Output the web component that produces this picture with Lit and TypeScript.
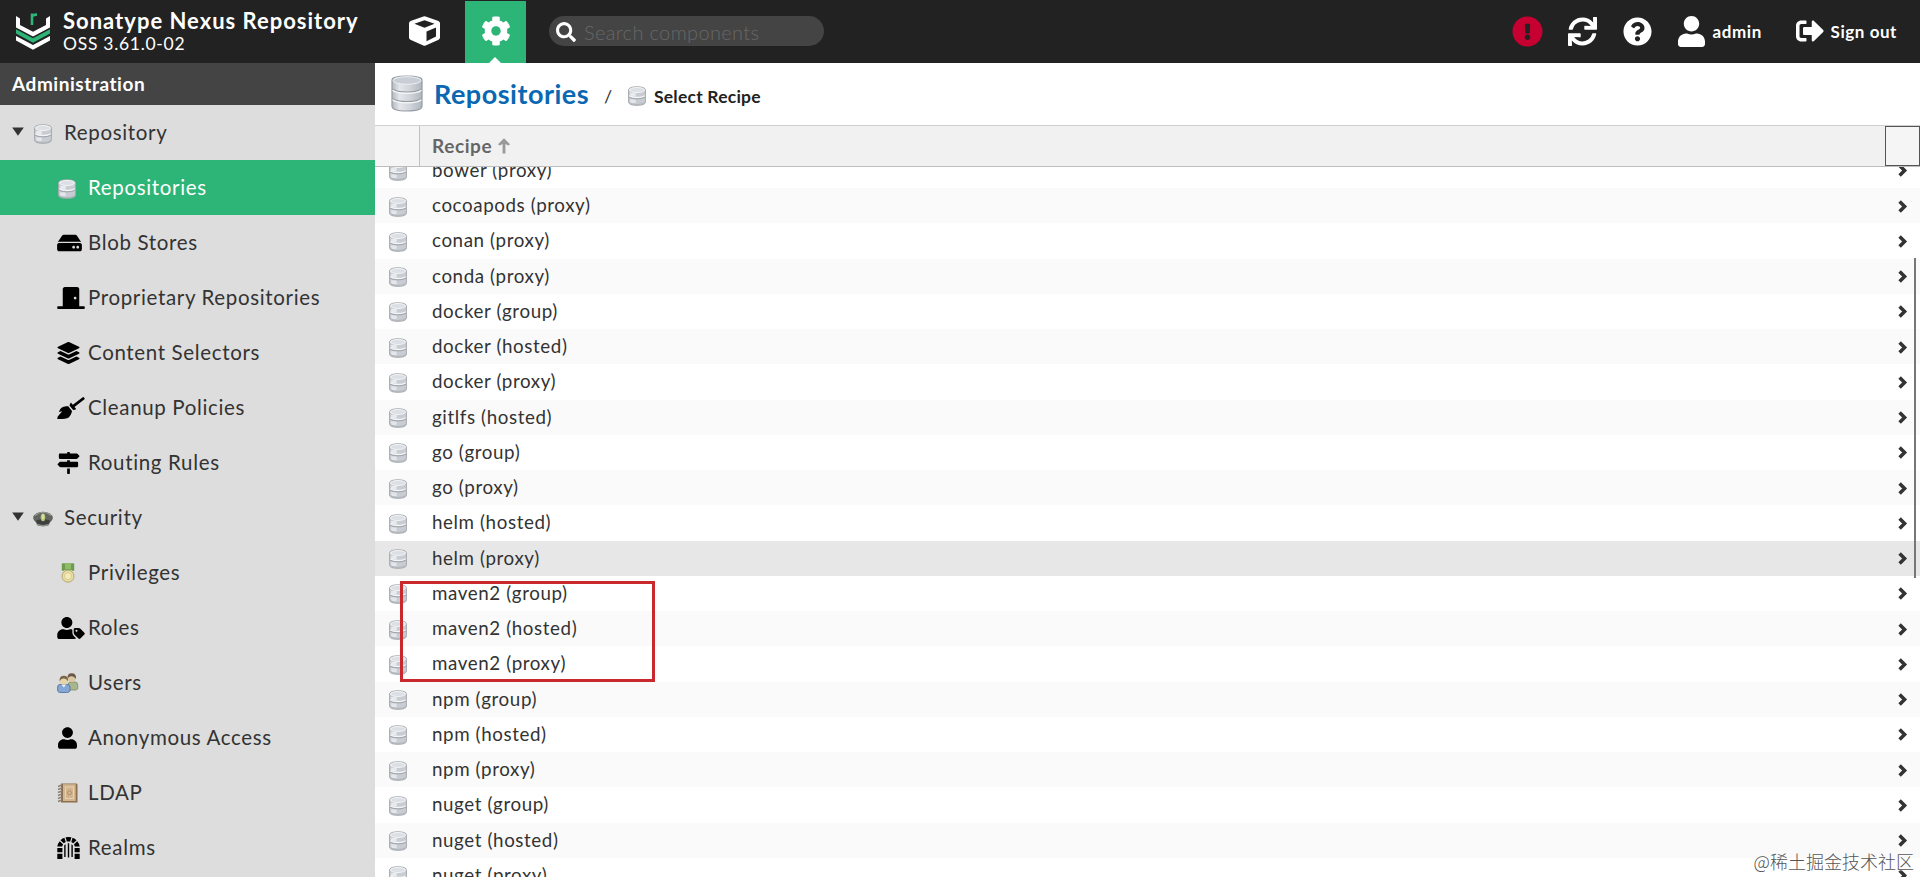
import { LitElement, html, css, svg, nothing } from "lit";
import { customElement, property } from "lit/decorators.js";
import { classMap } from "lit/directives/class-map.js";

type Glyph = { box: string; body: unknown };

const solid = (w: number, d: string): Glyph => ({ box: `0 0 ${w} 512`, body: svg`<path d=${d}></path>` });

const glyphs: Record<string, Glyph> = {
  hdd: solid(576, "M576 304v96c0 26.51-21.49 48-48 48H48c-26.51 0-48-21.49-48-48v-96c0-26.51 21.49-48 48-48h480c26.51 0 48 21.49 48 48zm-48-80a79.557 79.557 0 0 1 30.777 6.165L462.25 85.374A48.003 48.003 0 0 0 422.311 64H153.689a48 48 0 0 0-39.938 21.374L17.223 230.165A79.557 79.557 0 0 1 48 224h480zm-48 96c-17.673 0-32 14.327-32 32s14.327 32 32 32 32-14.327 32-32-14.327-32-32-32zm-96 0c-17.673 0-32 14.327-32 32s14.327 32 32 32 32-14.327 32-32-14.327-32-32-32z"),
  door: solid(640, "M624 448H512V50.8C512 22.78 490.47 0 464 0H175.99c-26.47 0-48 22.78-48 50.8V448H16c-8.84 0-16 7.16-16 16v32c0 8.84 7.16 16 16 16h608c8.84 0 16-7.16 16-16v-32c0-8.84-7.16-16-16-16zM415.99 288c-17.67 0-32-14.33-32-32s14.33-32 32-32 32 14.33 32 32c.01 17.67-14.32 32-32 32z"),
  layers: solid(512, "M12.41 148.02l232.94 105.67c6.8 3.09 14.49 3.09 21.29 0l232.94-105.67c16.55-7.51 16.55-32.52 0-40.03L266.65 2.31a25.607 25.607 0 0 0-21.29 0L12.41 107.98c-16.55 7.51-16.55 32.53 0 40.04zm487.18 88.28l-58.09-26.33-161.64 73.27c-7.56 3.43-15.59 5.17-23.86 5.17s-16.29-1.74-23.86-5.17L70.51 209.97l-58.1 26.33c-16.55 7.5-16.55 32.5 0 40l232.94 105.59c6.8 3.08 14.49 3.08 21.29 0L499.59 276.3c16.55-7.5 16.55-32.5 0-40zm0 127.8l-57.87-26.23-161.86 73.37c-7.56 3.43-15.59 5.17-23.86 5.17s-16.29-1.74-23.86-5.17L70.29 337.87 12.41 364.1c-16.55 7.5-16.55 32.5 0 40l232.94 105.59c6.8 3.08 14.49 3.08 21.29 0L499.59 404.1c16.55-7.5 16.55-32.5 0-40z"),
  broom: solid(640, "M256.47 216.77l86.73 109.18s-16.6 102.36-76.57 150.12C206.66 523.85 0 510.19 0 510.19s3.8-23.14 11-55.43l94.62-112.17c3.97-4.7-.87-11.62-6.65-9.5l-60.4 22.09c14.44-41.66 32.72-80.04 54.6-97.47 59.97-47.76 163.3-40.94 163.3-40.94zM636.53 31.03l-19.86-25c-5.49-6.9-15.52-8.05-22.41-2.56l-232.48 177.8-34.14-42.97c-5.09-6.41-15.14-5.21-18.59 2.21l-25.33 54.55 86.73 109.18 58.8-12.45c8-1.69 11.42-11.2 6.34-17.6l-34.09-42.92 232.48-177.8c6.89-5.48 8.04-15.53 2.55-22.44z"),
  signs: solid(512, "M507.31 84.69L464 41.37c-6-6-14.14-9.37-22.63-9.37H288V16c0-8.84-7.16-16-16-16h-32c-8.84 0-16 7.16-16 16v16H56c-13.25 0-24 10.75-24 24v80c0 13.25 10.75 24 24 24h385.37c8.49 0 16.62-3.37 22.63-9.37l43.31-43.31c6.25-6.26 6.25-16.38 0-22.63zM224 496c0 8.84 7.16 16 16 16h32c8.84 0 16-7.16 16-16V384h-64v112zm232-272H288v-32h-64v32H70.63c-8.49 0-16.62 3.37-22.63 9.37L4.69 276.69c-6.25 6.25-6.25 16.38 0 22.63L48 342.63c6 6 14.14 9.37 22.63 9.37H456c13.25 0 24-10.75 24-24v-80c0-13.25-10.75-24-24-24z"),
  userTag: solid(640, "M630.6 364.9l-90.3-90.2c-12-12-28.3-18.7-45.3-18.7h-79.3c-17.7 0-32 14.3-32 32v79.2c0 17 6.7 33.2 18.7 45.2l90.3 90.2c12.5 12.5 32.8 12.5 45.3 0l92.5-92.5c12.6-12.5 12.6-32.7.1-45.2zm-182.8-21c-13.3 0-24-10.7-24-24s10.7-24 24-24 24 10.7 24 24c0 13.2-10.7 24-24 24zm-223.8-88c70.7 0 128-57.3 128-128C352 57.3 294.7 0 224 0S96 57.3 96 128c0 70.6 57.3 127.9 128 127.9zm127.8 111.2V294c-12.2-3.6-24.9-6.2-38.2-6.2h-16.7c-22.2 10.2-46.9 16-72.9 16s-50.6-5.8-72.9-16h-16.7C60.2 287.9 0 348.1 0 422.3v41.6c0 26.5 21.5 48 48 48h352c15.5 0 29.1-7.5 37.9-18.9l-58-58c-18.1-18.1-28.1-42.2-28.1-67.9z"),
  user: solid(448, "M224 256c70.7 0 128-57.3 128-128S294.7 0 224 0 96 57.3 96 128s57.3 128 128 128zm89.6 32h-16.7c-22.2 10.2-46.9 16-72.9 16s-50.6-5.8-72.9-16h-16.7C60.2 288 0 348.2 0 422.4V464c0 26.5 21.5 48 48 48h352c26.5 0 48-21.5 48-48v-41.6c0-74.2-60.2-134.4-134.4-134.4z"),
  sync: solid(512, "M440.65 12.57l4 82.77A247.16 247.16 0 0 0 255.83 8C134.73 8 33.91 94.92 12.29 209.82A12 12 0 0 0 24.09 224h49.05a12 12 0 0 0 11.67-9.26 175.91 175.91 0 0 1 317-56.94l-101.46-4.86a12 12 0 0 0-12.57 12v47.41a12 12 0 0 0 12 12H500a12 12 0 0 0 12-12V12a12 12 0 0 0-12-12h-47.37a12 12 0 0 0-11.98 12.57zM255.83 432a175.61 175.61 0 0 1-146-77.8l101.8 4.87a12 12 0 0 0 12.57-12v-47.4a12 12 0 0 0-12-12H12a12 12 0 0 0-12 12V500a12 12 0 0 0 12 12h47.35a12 12 0 0 0 12-12.6l-4.15-82.57A247.17 247.17 0 0 0 255.83 504c121.11 0 221.93-86.92 243.55-201.82a12 12 0 0 0-11.8-14.18h-49.05a12 12 0 0 0-11.67 9.26A175.86 175.86 0 0 1 255.83 432z"),
  help: solid(512, "M504 256c0 136.997-111.043 248-248 248S8 392.997 8 256C8 119.083 119.043 8 256 8s248 111.083 248 248zM262.655 90c-54.497 0-89.255 22.957-116.549 63.758-3.536 5.286-2.353 12.415 2.715 16.258l34.699 26.31c5.205 3.947 12.621 3.008 16.665-2.122 17.864-22.658 30.113-35.797 57.303-35.797 20.429 0 45.698 13.148 45.698 32.958 0 14.976-12.363 22.667-32.534 33.976C247.128 238.528 216 254.941 216 296v4c0 6.627 5.373 12 12 12h56c6.627 0 12-5.373 12-12v-1.333c0-28.462 83.186-29.647 83.186-106.667 0-58.002-60.165-102-116.531-102zM256 338c-25.365 0-46 20.635-46 46 0 25.364 20.635 46 46 46s46-20.636 46-46c0-25.365-20.635-46-46-46z"),
  alert: solid(512, "M504 256c0 136.997-111.043 248-248 248S8 392.997 8 256C8 119.083 119.043 8 256 8s248 111.083 248 248zm-248 50c-25.405 0-46 20.595-46 46s20.595 46 46 46 46-20.595 46-46-20.595-46-46-46zm-43.673-165.346l7.418 136c.347 6.364 5.609 11.346 11.982 11.346h48.546c6.373 0 11.635-4.982 11.982-11.346l7.418-136c.375-6.874-5.098-12.654-11.982-12.654h-63.383c-6.884 0-12.356 5.78-11.981 12.654z"),
  signOut: solid(512, "M497 273L329 441c-15 15-41 4.5-41-17v-96H152c-13.3 0-24-10.7-24-24v-96c0-13.3 10.7-24 24-24h136V88c0-21.4 25.9-32 41-17l168 168c9.3 9.4 9.3 24.6 0 34zM192 436v-40c0-6.6-5.4-12-12-12H96c-17.7 0-32-14.3-32-32V160c0-17.7 14.3-32 32-32h84c6.6 0 12-5.4 12-12V76c0-6.6-5.4-12-12-12H96c-53 0-96 43-96 96v192c0 53 43 96 96 96h84c6.6 0 12-5.4 12-12z"),
  cog: solid(512, "M487.4 315.7l-42.6-24.6c4.3-23.2 4.3-47 0-70.2l42.6-24.6c4.9-2.8 7.1-8.6 5.5-14-11.1-35.6-30-67.8-54.7-94.6-3.8-4.1-10-5.1-14.8-2.3L380.8 110c-17.9-15.4-38.5-27.3-60.8-35.1V25.8c0-5.6-3.9-10.5-9.4-11.7-36.7-8.2-74.3-7.8-109.2 0-5.5 1.2-9.4 6.1-9.4 11.7V75c-22.2 7.9-42.8 19.8-60.8 35.1L88.7 85.5c-4.9-2.8-11-1.9-14.8 2.3-24.7 26.7-43.6 58.9-54.7 94.6-1.7 5.4.6 11.2 5.5 14L67.3 221c-4.3 23.2-4.3 47 0 70.2l-42.6 24.6c-4.9 2.8-7.1 8.6-5.5 14 11.1 35.6 30 67.8 54.7 94.6 3.8 4.1 10 5.1 14.8 2.3l42.6-24.6c17.9 15.4 38.5 27.3 60.8 35.1v49.2c0 5.6 3.9 10.5 9.4 11.7 36.7 8.2 74.3 7.8 109.2 0 5.5-1.2 9.4-6.1 9.4-11.7v-49.2c22.2-7.9 42.8-19.8 60.8-35.1l42.6 24.6c4.9 2.8 11 1.9 14.8-2.3 24.7-26.7 43.6-58.9 54.7-94.6 1.5-5.5-.7-11.3-5.6-14.1zM256 336c-44.1 0-80-35.9-80-80s35.9-80 80-80 80 35.9 80 80-35.9 80-80 80z"),
  search: solid(512, "M505 442.7L405.3 343c-4.5-4.5-10.6-7-17-7H372c27.6-35.3 44-79.7 44-128C416 93.1 322.9 0 208 0S0 93.1 0 208s93.1 208 208 208c48.3 0 92.7-16.4 128-44v16.3c0 6.4 2.5 12.5 7 17l99.7 99.7c9.4 9.4 24.6 9.4 33.9 0l28.3-28.3c9.4-9.4 9.4-24.6.1-34zM208 336c-70.7 0-128-57.2-128-128 0-70.7 57.2-128 128-128 70.7 0 128 57.2 128 128 0 70.7-57.2 128-128 128z"),
  cube: {
    box: "0 0 31 30",
    body: svg`<path fill-rule="evenodd" d="M14.4.4q1.1-.5 2.2 0L29.400 5q1.600.7 1.600 2.300V21.500q0 1.500-1.400 2.200L16.700 29.600q-1.200.5-2.400 0L1.400 23.700Q0 23 0 21.500V7.300Q0 5.700 1.600 5ZM15.500 4.300 5.400 7.700 15.500 11.800 25.600 7.700ZM17.500 15.400V25.200L27 20.600V11.500Z"></path>`,
  },
  gate: {
    box: "0 0 23 22",
    body: svg`<path d="M8.600.3Q11.500-.3 14.400.3L13.200 4.600H9.800ZM7.400.7 8.700 5 6.800 6.200 3.500 3.200Q5 1.500 7.400.7ZM15.600.7 14.300 5 16.200 6.200 19.500 3.200Q18 1.500 15.600.7ZM2.700 4.200 6 7.200 5.200 9.500H.3Q.7 6.500 2.700 4.200ZM20.300 4.200 17 7.200 17.800 9.500H22.700Q22.300 6.500 20.300 4.200ZM.3 10.900H5.400V15.300H.3ZM17.600 10.900H22.700V15.300H17.600ZM.3 16.700H5.400V22H.3ZM17.600 16.700H22.700V22H17.600ZM7.200 8.300 8.600 7.200V20H7.200ZM10.800 6.300H12.200V20.500H10.800ZM14.400 7.200 15.800 8.300V20H14.400Z"></path>`,
  },
  chevron: {
    box: "0 0 9 13",
    body: svg`<path d="M1.600 1.500 6.600 6.500 1.600 11.500" fill="none" stroke="currentColor" stroke-width="3.500"></path>`,
  },
  caret: { box: "0 0 12 9", body: svg`<path d="M.2.5H11.800L6 8.700Z"></path>` },
  sortUp: {
    box: "0 0 12 16",
    body: svg`<path d="M6 15.500V4" fill="none" stroke="currentColor" stroke-width="2.800"></path><path d="M6 .3 12 6.200 10.500 7.600 6 5.500 1.500 7.600 0 6.200Z"></path>`,
  },
  logo: {
    box: "0 0 34 37",
    body: svg`<path fill="#fff" d="M0 3 4 5.500V12L17 18.800 30 12V5.500L34 3V14.500L17 23.500 0 14.500Z"></path>
      <path fill="#2db477" d="M0 16.200 17 25.300 34 16.200V20.600L17 29.800 0 20.600Z"></path>
      <path fill="#fff" d="M0 23 17 32 34 23V27.500L17 36.800 0 27.500Z"></path>
      <path fill="none" stroke="#2db477" stroke-width="2.600" d="M16 12V.5M16 3.600Q17.200 1.400 21 1.600"></path>`,
  },
  database: {
    box: "0 0 18 20",
    body: svg`<path d="M.6 4Q.6.8 9 .8T17.400 4V16Q17.400 19.300 9 19.300T.6 16Z" fill="#c9cdd3" stroke="#a6aab0"></path>
      <rect x="2.200" y="7" width="5.500" height="3.500" fill="#e8ebee"></rect><rect x="2.200" y="13.300" width="5.500" height="3.800" fill="#e3e6ea"></rect>
      <path d="M1.300 9.800Q3.500 11.500 9 11.500T16.700 9.800" fill="none" stroke="#f4f5f6" stroke-width="1.400"></path>
      <path d="M1 11.100Q3.500 12.900 9 12.900T17 11.100" fill="none" stroke="#999ea5" stroke-width=".9"></path>
      <ellipse cx="9" cy="4" rx="7.500" ry="2.500" fill="#dcdfe4" stroke="#f5f6f7" stroke-width=".9"></ellipse>
      <path d="M1.500 16.500Q4 18.500 9 18.500T16.500 16.500" fill="none" stroke="#b0b4ba" stroke-width=".9"></path>`,
  },
  databaseLarge: {
    box: "0 0 32 37",
    body: svg`<defs><linearGradient id="m"><stop offset="0" stop-color="#b4bac2"></stop><stop offset=".25" stop-color="#e3e6ea"></stop><stop offset=".6" stop-color="#d0d5db"></stop><stop offset="1" stop-color="#b0b6be"></stop></linearGradient></defs>
      <path d="M1 5Q1 1 16 1T31 5V31Q31 36 16 36T1 31Z" fill="url(#m)" stroke="#969ca4" stroke-width="1.200"></path>
      <ellipse cx="16" cy="5.500" rx="14" ry="3.800" fill="#c9ced6" stroke="#eceef1"></ellipse>
      <path d="M1.600 14Q5 17 16 17T30.400 14M1.600 23.500Q5 26.500 16 26.500T30.400 23.500" fill="none" stroke="#959ba3" stroke-width="1.100"></path>
      <path d="M1.600 15.300Q5 18.300 16 18.300T30.400 15.300M1.600 24.800Q5 27.800 16 27.800T30.400 24.800" fill="none" stroke="#f6f7f8" stroke-width="1.300"></path>`,
  },
  cap: {
    box: "0 0 20 16",
    body: svg`<ellipse cx="10" cy="7" rx="9.800" ry="6.300" fill="#62645f"></ellipse><path d="M3 9.500Q10 6.500 17 9.500L16 14Q10 16.500 4 14Z" fill="#3e403d"></path>
      <path d="M4 13.400Q10 15.800 16 13.400" fill="none" stroke="#8e918d" stroke-width="1.200"></path><path d="M2 4.500Q10-2 18 4.500" fill="none" stroke="#999c96" stroke-width="1.200"></path>
      <ellipse cx="10" cy="6.300" rx="2.300" ry="3.900" fill="#b7c77c"></ellipse><path d="M10 3.300V8" stroke="#e9ecb2" stroke-width="1.300"></path>`,
  },
  medal: {
    box: "0 0 14 20",
    body: svg`<rect x=".8" y=".3" width="12.400" height="7.500" fill="#6d9c4b"></rect><rect x="4" y=".3" width="6" height="6" fill="#8fbc68"></rect>
      <path d="M3 7.200H11V9.500H3Z" fill="#dfe3c8"></path><circle cx="7" cy="13.200" r="6" fill="#e9dfa4" stroke="#b3a673"></circle><circle cx="7" cy="13.200" r="3.600" fill="#f1eab9" stroke="#d2c583" stroke-width=".8"></circle>`,
  },
  users: {
    box: "0 0 21 20",
    body: svg`<path d="M11 17V12Q11 9 14 9H18Q20.700 9 20.700 12V16Q20 17 18 17Z" fill="#a9b58c" stroke="#7f8c63" stroke-width=".8"></path><circle cx="14.700" cy="5" r="3.900" fill="#dcc9a2"></circle>
      <path d="M10.500 6Q9.800.3 14.700.3T19 6Q17 3 14.500 3.300 11.500 3 10.500 6Z" fill="#6c5844"></path>
      <path d="M.6 18V14Q.6 11.300 4 11.300H9.500Q13 11.300 13 14V18Q12 19.500 9.500 19.500H4Q1.200 19.500.6 18Z" fill="#84a7d6" stroke="#54759f" stroke-width=".9"></path>
      <path d="M4.500 11.500H9L6.800 14.500Z" fill="#eef3f8"></path><circle cx="6.800" cy="7.500" r="3.900" fill="#e6d4a8"></circle><path d="M2.600 8.300Q2 2.700 6.800 2.700T11 8.300Q9.500 5.300 6.800 5.600 4 5.300 2.600 8.300Z" fill="#7a6549"></path>`,
  },
  book: {
    box: "0 0 21 20",
    body: svg`<path d="M4 .5H19.500Q20.500.5 20.500 2V19.500H4Z" fill="#8c6f4f"></path><rect x="6" y="1.200" width="12.700" height="16.800" fill="#d2b48f"></rect>
      <rect x="8.500" y="4" width="8" height="11.500" fill="none" stroke="#e6d2b5"></rect><circle cx="12.500" cy="9.800" r="2" fill="none" stroke="#b08f68"></circle>
      <path d="M1 3.500 5 2M1 6.500 5 5M1 9.500 5 8M1 12.500 5 11M1 15.500 5 14M1 18.500 5 17" stroke="#8a8274" stroke-width="1.500"></path>`,
  },
};

@customElement("nx-glyph")
export class NxGlyph extends LitElement {
  @property() name = "";
  static styles = css`
    :host { display: block; flex: none; }
    svg { display: block; width: 100%; height: 100%; fill: currentColor; overflow: visible; }
  `;
  render() {
    const g = glyphs[this.name];
    return g ? html`<svg viewBox=${g.box} aria-hidden="true">${g.body}</svg>` : nothing;
  }
}

type Entry = { label: string; icon: string; size: string; group?: boolean; active?: boolean };

const menu: Entry[] = [
  { label: "Repository", icon: "database", size: "small", group: true },
  { label: "Repositories", icon: "database", size: "small", active: true },
  { label: "Blob Stores", icon: "hdd", size: "w25" },
  { label: "Proprietary Repositories", icon: "door", size: "w28" },
  { label: "Content Selectors", icon: "layers", size: "w22" },
  { label: "Cleanup Policies", icon: "broom", size: "w28" },
  { label: "Routing Rules", icon: "signs", size: "w22" },
  { label: "Security", icon: "cap", size: "hat", group: true },
  { label: "Privileges", icon: "medal", size: "medal" },
  { label: "Roles", icon: "userTag", size: "w28" },
  { label: "Users", icon: "users", size: "pic" },
  { label: "Anonymous Access", icon: "user", size: "w19" },
  { label: "LDAP", icon: "book", size: "pic" },
  { label: "Realms", icon: "gate", size: "w22" },
];

const recipes = [
  "bower (proxy)", "cocoapods (proxy)", "conan (proxy)", "conda (proxy)", "docker (group)", "docker (hosted)",
  "docker (proxy)", "gitlfs (hosted)", "go (group)", "go (proxy)", "helm (hosted)", "helm (proxy)",
  "maven2 (group)", "maven2 (hosted)", "maven2 (proxy)", "npm (group)", "npm (hosted)", "npm (proxy)",
  "nuget (group)", "nuget (hosted)", "nuget (proxy)",
];

@customElement("app-root")
export class AppRoot extends LitElement {
  static styles = css`
    :host {
      display: grid; grid-template: 63px 1fr / 375px 1fr; position: relative;
      width: 100%; height: 100vh; overflow: hidden; box-sizing: border-box;
      font-family: Lato, "Open Sans", sans-serif; font-variant-ligatures: none; color: #333; background: #fff;
    }
    * { box-sizing: border-box; }
    .top { grid-column: 1 / 3; display: flex; background: #222; color: #fff; }
    .logo { width: 34px; height: 37px; margin: 13px 13px 0 16px; }
    .brand { width: 337px; padding-top: 7px; white-space: nowrap; }
    .product { font-size: 22px; line-height: 28px; font-weight: 700; letter-spacing: 1px; }
    .version { font-size: 17.500px; line-height: 18px; letter-spacing: .7px; }
    .tab { width: 61px; margin-top: 1px; padding: 15px 15px 0 16px; position: relative; }
    .tab.browse { padding-left: 9px; }
    .tab.on { background: #2db477; margin-left: 4px; }
    .tab.on::after {
      content: ""; position: absolute; left: 24px; bottom: 0; border: 6px solid transparent;
      border-top: 0; border-bottom-color: #fff;
    }
    .cube { width: 31px; height: 30px; }
    .cog { width: 30px; height: 30px; }
    .search {
      width: 275px; height: 30px; margin: 16px auto 0 23px; border-radius: 15px; background: #444;
      display: flex; align-items: center; gap: 8px; padding-left: 7px;
      color: #676767; font-size: 20px; letter-spacing: .35px; font-weight: 300;
    }
    .lens { width: 20px; height: 20px; margin-top: 2px; color: #fff; }
    .hint { padding-top: 2px; }
    .actions {
      display: flex; align-items: center; height: 62px; padding-right: 23px;
      font-size: 17px; font-weight: 700; letter-spacing: .55px;
    }
    .alert { width: 31px; height: 31px; color: #c70032; margin-right: 25px; }
    .sync { width: 29px; height: 29px; margin-right: 26px; }
    .help { width: 29px; height: 29px; margin-right: 26px; }
    .person { width: 27px; height: 31px; margin-right: 8px; }
    .leave { width: 28px; height: 28px; margin-right: 7px; }
    .name { width: 83px; }
    .side { background: #ddd; overflow: hidden; }
    .heading { height: 42px; padding: 0 12px; background: #444; color: #fff; font-size: 19px; font-weight: 700; line-height: 41px; letter-spacing: .55px; }
    .entry { height: 55px; display: flex; align-items: center; font-size: 20.500px; letter-spacing: .65px; padding-left: 57px; }
    .entry.group { padding-left: 12px; }
    .entry.active { background: #2db477; color: #fff; }
    .label { padding-bottom: 2px; }
    .slot { width: 31px; flex: none; color: #000; }
    .caret { width: 12px; height: 9px; margin: -2px 9px 0 0; color: #333; }
    .small { width: 18px; height: 20px; margin: 2px 0 0 2px; }
    .active .small, .group .small { margin-left: 1px; }
    .hat { width: 20px; height: 16px; margin-top: 2px; }
    .w25 { width: 25px; height: 22px; } .w28 { width: 28px; height: 22px; }
    .w22 { width: 23px; height: 22px; } .w19 { width: 19px; height: 22px; margin-left: 1px; }
    .pic { width: 21px; height: 20px; } .medal { width: 14px; height: 20px; margin-left: 4px; }
    .main { display: flex; flex-direction: column; min-height: 0; overflow: hidden; position: relative; }
    .crumbs { height: 62px; flex: none; display: flex; align-items: flex-start; padding-left: 16px; }
    .big { width: 32px; height: 37px; margin-top: 12px; }
    .title { margin: 14px 16px 0 11px; width: 154px; color: #0a68b3; font-size: 27px; line-height: 34px; font-weight: 700; letter-spacing: .5px; white-space: nowrap; }
    .slash { width: 24px; margin-top: 21px; font-size: 18px; line-height: 24px; }
    .mini { width: 18px; height: 20px; margin: 23px 8px 0 0; }
    .step { margin-top: 22px; font-size: 17.500px; line-height: 24px; font-weight: 700; letter-spacing: .22px; color: #222; }
    .head { height: 42px; flex: none; display: flex; background: #f1f1f1; border-top: 1px solid #d0d0d0; border-bottom: 1px solid #bdbdbd; }
    .icons { width: 45px; background: #f5f5f5; border-right: 1px solid #c0c0c0; }
    .column { flex: 1; display: flex; align-items: center; gap: 6px; padding: 0 0 2px 12px; color: #666; font-size: 19px; font-weight: 700; letter-spacing: .6px; }
    .sort { width: 12px; height: 16px; color: #999; margin-top: 2px; }
    .corner { width: 35px; background: #f5f5f5; border: 1px solid #555; }
    .list { flex: 1; min-height: 0; overflow: hidden; }
    .rows { margin-top: -14.250px; }
    .row { height: 35.250px; display: flex; align-items: center; padding: 0 13px 0 14px; font-size: 18.750px; letter-spacing: .6px; background: #fff; }
    .row:nth-child(even) { background: #fafafa; }
    .row.hover { background: #e7e7e7; }
    .kind { width: 18px; height: 20px; margin: 2px 25px 0 0; }
    .text { flex: 1; padding-bottom: 2px; }
    .go { width: 9px; height: 13px; margin-top: 1px; }
    .thumb { position: absolute; left: 1539px; top: 195px; width: 2px; height: 320px; background: #777; }
    .marker { position: absolute; left: 25px; top: 518px; width: 255px; height: 101px; border: 3px solid #c9282d; }
    .mark {
      position: absolute; right: 6px; bottom: 3px; font: 300 18px/26px "Noto Sans CJK SC", sans-serif; color: #555;
      text-shadow: 0 0 2px #fff, 0 0 2px #fff; white-space: nowrap;
    }
  `;

  private entry(e: Entry) {
    return html`<div class=${classMap({ entry: true, group: !!e.group, active: !!e.active })}>
      ${e.group ? html`<nx-glyph class="caret" name="caret"></nx-glyph>` : nothing}
      <div class="slot"><nx-glyph class=${e.size} name=${e.icon}></nx-glyph></div>
      <span class="label">${e.label}</span>
    </div>`;
  }

  render() {
    return html`
      <header class="top">
        <nx-glyph class="logo" name="logo"></nx-glyph>
        <div class="brand">
          <div class="product">Sonatype Nexus Repository</div>
          <div class="version">OSS 3.61.0-02</div>
        </div>
        <div class="tab browse"><nx-glyph class="cube" name="cube"></nx-glyph></div>
        <div class="tab on"><nx-glyph class="cog" name="cog"></nx-glyph></div>
        <div class="search"><nx-glyph class="lens" name="search"></nx-glyph><span class="hint">Search components</span></div>
        <div class="actions">
          <nx-glyph class="alert" name="alert"></nx-glyph>
          <nx-glyph class="sync" name="sync"></nx-glyph>
          <nx-glyph class="help" name="help"></nx-glyph>
          <nx-glyph class="person" name="user"></nx-glyph><span class="name">admin</span>
          <nx-glyph class="leave" name="signOut"></nx-glyph><span class="out">Sign out</span>
        </div>
      </header>
      <nav class="side">
        <div class="heading">Administration</div>
        ${menu.map((e) => this.entry(e))}
      </nav>
      <main class="main">
        <div class="crumbs">
          <nx-glyph class="big" name="databaseLarge"></nx-glyph>
          <span class="title">Repositories</span><span class="slash">/</span>
          <nx-glyph class="mini" name="database"></nx-glyph><span class="step">Select Recipe</span>
        </div>
        <div class="head">
          <div class="icons"></div>
          <div class="column">Recipe<nx-glyph class="sort" name="sortUp"></nx-glyph></div>
          <div class="corner"></div>
        </div>
        <div class="list"><div class="rows">
          ${recipes.map((r) => html`<div class=${classMap({ row: true, hover: r === "helm (proxy)" })}>
            <nx-glyph class="kind" name="database"></nx-glyph><span class="text">${r}</span><nx-glyph class="go" name="chevron"></nx-glyph>
          </div>`)}
        </div></div>
        <div class="thumb"></div>
        <div class="marker"></div>
      </main>
      <div class="mark">@稀土掘金技术社区</div>
    `;
  }
}
